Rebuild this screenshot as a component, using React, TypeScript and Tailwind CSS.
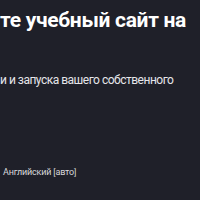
export default function App() {
  return (
    <div className="w-[200px] h-[200px] overflow-hidden bg-[#1f2029] font-['Roboto','Liberation_Sans',sans-serif]">
      <div className="pt-[5px] pl-0">
        <h1 className="text-[21px] leading-[30px] font-bold tracking-[-0.3px] text-white whitespace-nowrap">
          те учебный сайт на
        </h1>
        <p className="mt-[36px] text-[12px] leading-[18px] tracking-[-0.5px] text-[#e6e6ea] whitespace-nowrap">
          и и запуска вашего собственного
        </p>
        <div className="mt-[76px] pl-[3px] text-[9px] leading-[14px] tracking-[-0.2px] text-[#d8d8dc] whitespace-nowrap">
          Английский [авто]
        </div>
      </div>
    </div>
  );
}
